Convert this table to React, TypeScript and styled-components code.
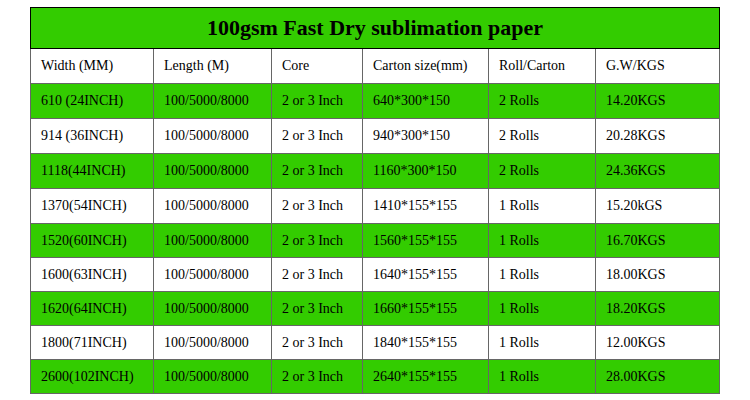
import styled, { createGlobalStyle } from "styled-components";

const GlobalStyle = createGlobalStyle`
  body {
    margin: 0;
    background: #fff;
    font-family: "Liberation Serif", "Times New Roman", serif;
  }
`;

const Page = styled.div`
  padding: 7px 0 0 30px;
`;

const SpecTable = styled.table`
  width: 689px;
  border-collapse: collapse;
  table-layout: fixed;
  font-family: "Liberation Serif", "Times New Roman", serif;
  font-size: 14px;
  color: #000;
`;

const TitleCell = styled.th`
  height: 40px;
  padding: 0;
  background: #33cc00;
  border: 1px solid #000;
  font-family: "Liberation Serif", "Times New Roman", serif;
  font-size: 22px;
  font-weight: bold;
  text-align: center;
`;

const Row = styled.tr<{ $green?: boolean; $h: number }>`
  height: ${(p) => p.$h}px;
  background: ${(p) => (p.$green ? "#33cc00" : "#fff")};
`;

const Cell = styled.td`
  padding: 0 0 0 10px;
  border: 1px solid #666;
  font-family: "Liberation Serif", "Times New Roman", serif;
  font-size: 14px;
  text-align: left;
  vertical-align: middle;
  white-space: nowrap;
`;

const colWidths = [123, 118, 91, 126, 107, 124];

const header = ["Width (MM)", "Length (M)", "Core", "Carton size(mm)", "Roll/Carton", "G.W/KGS"];

const rows = [
  ["610 (24INCH)", "100/5000/8000", "2 or 3 Inch", "640*300*150", "2 Rolls", "14.20KGS"],
  ["914 (36INCH)", "100/5000/8000", "2 or 3 Inch", "940*300*150", "2 Rolls", "20.28KGS"],
  ["1118(44INCH)", "100/5000/8000", "2 or 3 Inch", "1160*300*150", "2 Rolls", "24.36KGS"],
  ["1370(54INCH)", "100/5000/8000", "2 or 3 Inch", "1410*155*155", "1 Rolls", "15.20kGS"],
  ["1520(60INCH)", "100/5000/8000", "2 or 3 Inch", "1560*155*155", "1 Rolls", "16.70KGS"],
  ["1600(63INCH)", "100/5000/8000", "2 or 3 Inch", "1640*155*155", "1 Rolls", "18.00KGS"],
  ["1620(64INCH)", "100/5000/8000", "2 or 3 Inch", "1660*155*155", "1 Rolls", "18.20KGS"],
  ["1800(71INCH)", "100/5000/8000", "2 or 3 Inch", "1840*155*155", "1 Rolls", "12.00KGS"],
  ["2600(102INCH)", "100/5000/8000", "2 or 3 Inch", "2640*155*155", "1 Rolls", "28.00KGS"],
];

export default function App() {
  return (
    <Page>
      <GlobalStyle />
      <SpecTable>
        <colgroup>
          {colWidths.map((w, i) => (
            <col key={i} style={{ width: w }} />
          ))}
        </colgroup>
        <thead>
          <tr>
            <TitleCell colSpan={6}>100gsm Fast Dry sublimation paper</TitleCell>
          </tr>
        </thead>
        <tbody>
          <Row $h={35}>
            {header.map((h) => (
              <Cell key={h}>{h}</Cell>
            ))}
          </Row>
          {rows.map((r, i) => (
            <Row key={r[0]} $green={i % 2 === 0} $h={i < 4 ? 35 : 34}>
              {r.map((c, j) => (
                <Cell key={j}>{c}</Cell>
              ))}
            </Row>
          ))}
        </tbody>
      </SpecTable>
    </Page>
  );
}
